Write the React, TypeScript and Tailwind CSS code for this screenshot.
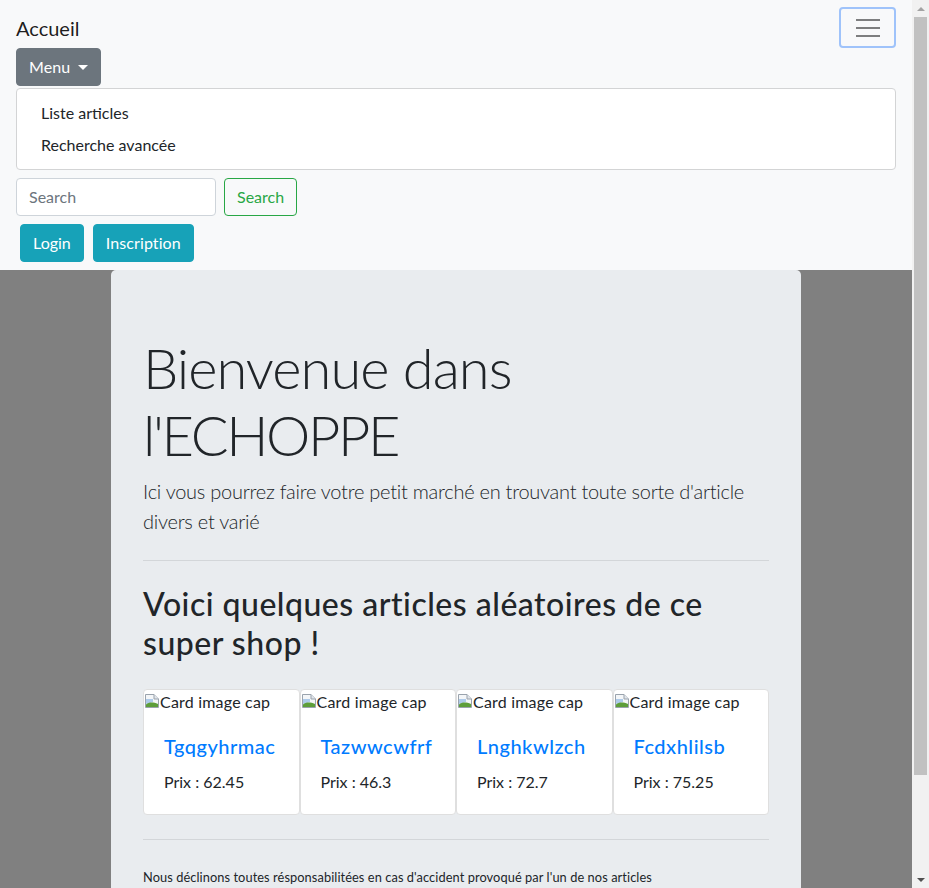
import React from "react";

const font = { fontFamily: 'Lato, "Noto Sans", "Liberation Sans", sans-serif' };

function BrokenImg() {
  return (
    <div className="flex items-start h-[24px] pt-[2px] text-[16px] leading-[20px] text-[#212529] tracking-[0.2px]">
      <svg width="16" height="16" viewBox="0 0 16 16" className="shrink-0 mt-[1px]">
        <path d="M1.5 1.5 H10 L14.5 6 V14.5 H1.5 Z" fill="#f4f6f8" stroke="#9aa3ad" strokeWidth="1" />
        <path d="M10 1.5 V6 H14.5" fill="#e1e5ea" stroke="#9aa3ad" strokeWidth="1" />
        <path d="M2 6 H9 V9 L2 11 Z" fill="#aecbea" />
        <path d="M2 14 L2 11.5 C5 9 9 9 14 11 V14 Z" fill="#5e9e3a" />
      </svg>
      <span className="ml-[0px]">Card image cap</span>
    </div>
  );
}

function Card({ title, price }: { title: string; price: string }) {
  return (
    <div className="bg-white border border-[#dfdfdf] rounded-[4px] flex flex-col">
      <BrokenImg />
      <div className="p-5">
        <div className="text-[20px] leading-[24px] font-medium text-[#007bff] mb-3 tracking-[0.5px]">{title}</div>
        <div className="text-[16px] leading-[24px] text-[#212529]">Prix : {price}</div>
      </div>
    </div>
  );
}

export default function App() {
  return (
    <div className="flex w-[929px] h-[888px] overflow-hidden bg-[#808080]" style={font}>
      <div className="w-[912px] flex flex-col">
        <nav className="bg-[#f8f9fa] px-4 pt-2 pb-2 text-[16px] leading-[24px] text-[#212529]">
          <div className="flex justify-between items-start">
            <a className="text-[20px] leading-[30px] py-[5px] text-[rgba(0,0,0,0.9)]">Accueil</a>
            <button className="w-[57px] h-[41px] mt-[-1px] border-2 border-[#9fc3fa] rounded-[4px] flex flex-col items-center justify-center gap-[6px]">
              <span className="block w-[24px] h-[2px] bg-[#7d7e7f]" />
              <span className="block w-[24px] h-[2px] bg-[#7d7e7f]" />
              <span className="block w-[24px] h-[2px] bg-[#7d7e7f]" />
            </button>
          </div>
          <div className="flex">
            <button className="h-[38px] px-3 bg-[#6c757d] border border-[#6c757d] text-white rounded-[4px] flex items-center text-[16px] tracking-[0.1px]">
              Menu
              <span className="ml-[8px] w-0 h-0 border-l-[5px] border-r-[5px] border-t-[5px] border-l-transparent border-r-transparent border-t-white" />
            </button>
          </div>
          <div className="mt-[2px] bg-white border border-[#d3d4d5] rounded-[4px] py-2">
            <div className="px-6 py-1">Liste articles</div>
            <div className="px-6 py-1">Recherche avancée</div>
          </div>
          <div className="flex mt-2 gap-2">
            <div className="w-[200px] h-[38px] bg-white border border-[#ced4da] rounded-[4px] px-3 flex items-center text-[#6c757d]">
              Search
            </div>
            <button className="h-[38px] px-3 border border-[#28a745] text-[#28a745] rounded-[4px]">Search</button>
          </div>
          <div className="flex mt-2 ml-1 gap-[9px]">
            <button className="h-[38px] px-3 bg-[#17a2b8] border border-[#17a2b8] text-white rounded-[4px]">Login</button>
            <button className="h-[38px] px-3 bg-[#17a2b8] border border-[#17a2b8] text-white rounded-[4px] tracking-[0.1px]">Inscription</button>
          </div>
        </nav>
        <main className="flex-1 overflow-hidden">
          <div className="w-[690px] mx-auto bg-[#e9ecef] rounded-[5px] px-8 pt-16 pb-16 text-[#212529]">
            <h1 className="text-[56px] leading-[67.2px] font-light mb-2">
              <span className="block whitespace-nowrap tracking-[-0.95px]">Bienvenue dans</span>
              <span className="block whitespace-nowrap tracking-[-2.4px]">l'ECHOPPE</span>
            </h1>
            <p className="text-[20px] leading-[30px] font-light tracking-[-0.26px]">
              <span className="block whitespace-nowrap">Ici vous pourrez faire votre petit marché en trouvant toute sorte d'article</span>
              <span className="block whitespace-nowrap">divers et varié</span>
            </p>
            <hr className="mt-6 mb-6 border-t border-[#d3d6d9]" />
            <h2 className="text-[32px] leading-[38.4px] font-medium tracking-[0.5px]">
              <span className="block whitespace-nowrap">Voici quelques articles aléatoires de ce</span>
              <span className="block whitespace-nowrap">super shop !</span>
            </h2>
            <div className="grid grid-cols-4 mt-[27px]">
              <Card title="Tgqgyhrmac" price="62.45" />
              <Card title="Tazwwcwfrf" price="46.3" />
              <Card title="Lnghkwlzch" price="72.7" />
              <Card title="Fcdxhlilsb" price="75.25" />
            </div>
            <hr className="mt-6 mb-6 border-t border-[#d3d6d9]" />
            <p className="text-[16px] leading-[24px]">
              <small className="text-[12.8px] tracking-[0.08px]">Nous déclinons toutes résponsabilitées en cas d'accident provoqué par l'un de nos articles</small>
            </p>
          </div>
        </main>
      </div>
      <div className="w-[17px] h-[888px] bg-[#f1f1f1] flex flex-col items-center">
        <div className="h-[17px] w-full flex items-center justify-center">
          <span className="w-0 h-0 border-l-[4px] border-r-[4px] border-b-[4px] border-l-transparent border-r-transparent border-b-[#a3a3a3]" />
        </div>
        <div className="w-[13px] h-[758px] bg-[#c1c1c1]" />
        <div className="flex-1" />
        <div className="h-[17px] w-full flex items-center justify-center">
          <span className="w-0 h-0 border-l-[4px] border-r-[4px] border-t-[4px] border-l-transparent border-r-transparent border-t-[#505050]" />
        </div>
      </div>
    </div>
  );
}
